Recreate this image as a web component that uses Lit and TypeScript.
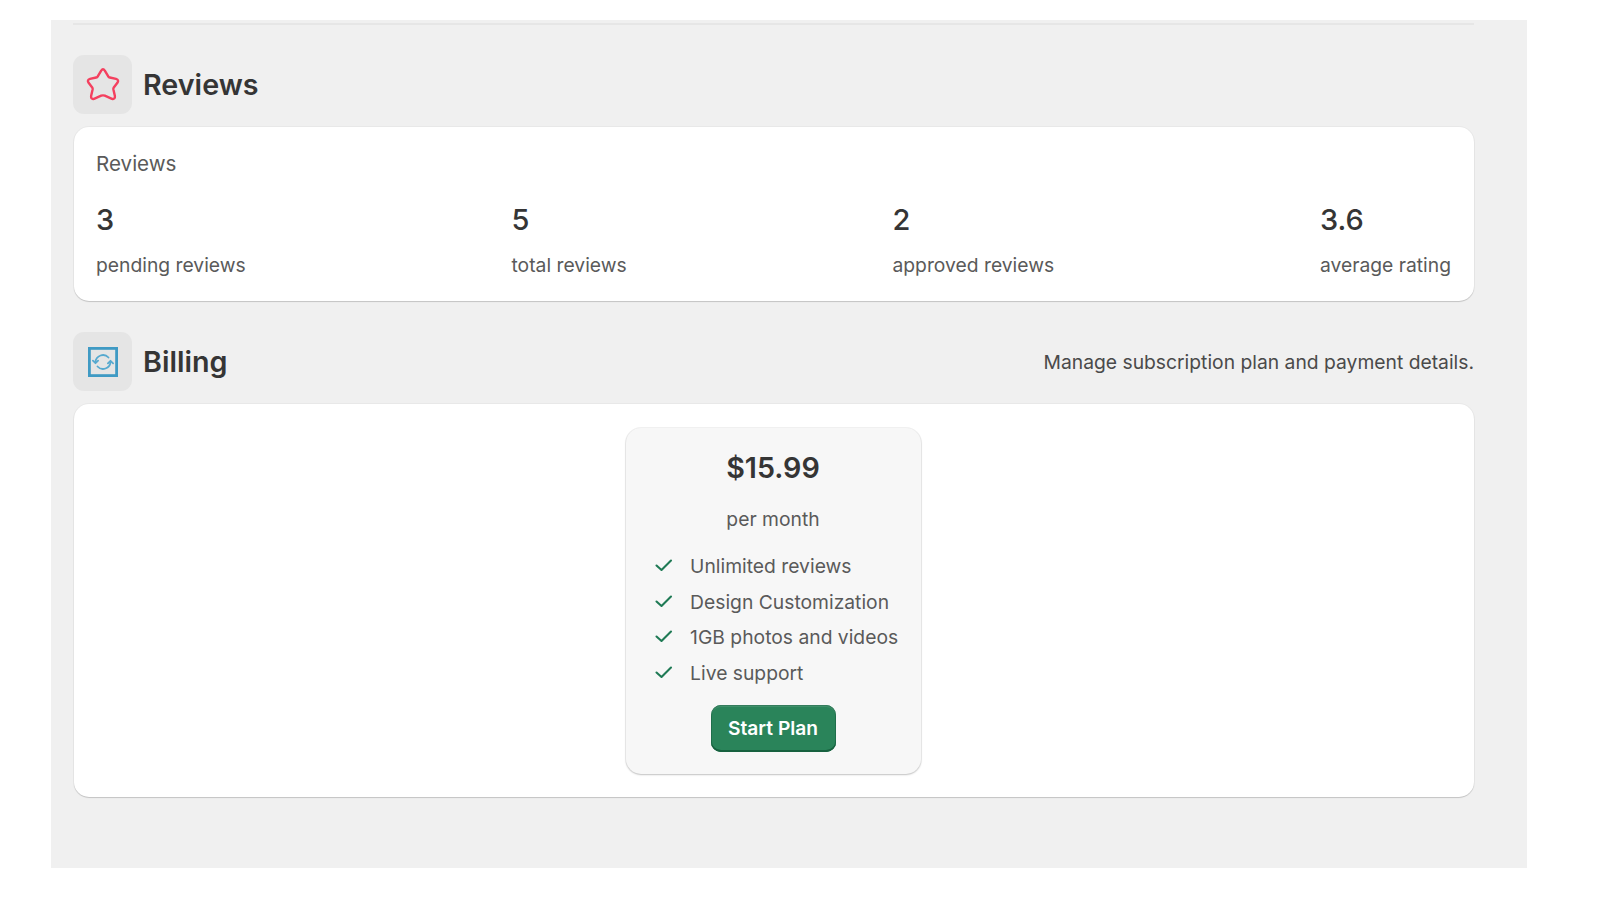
import { LitElement, html, css } from "lit";
import { customElement } from "lit/decorators.js";

const check = html`<svg class="check" viewBox="0 0 20 20" width="20" height="20" fill="none" stroke="#1f7a55" stroke-width="2.1" stroke-linecap="round" stroke-linejoin="round"><path d="M2.5 10.5 L7.5 15 L17 5.5"/></svg>`;

const features = ["Unlimited reviews", "Design Customization", "1GB photos and videos", "Live support"];
const stats = [
  ["3", "pending reviews"],
  ["5", "total reviews"],
  ["2", "approved reviews"],
  ["3.6", "average rating"],
];

@customElement("app-root")
export class AppRoot extends LitElement {
  static styles = css`
    :host {
      display: block;
      box-sizing: border-box;
      height: 900px;
      padding: 20px 73px 32px 51px;
      background: #fff;
      font-family: Inter, "Noto Sans", sans-serif;
      color: #303030;
    }
    .panel {
      box-sizing: border-box;
      height: 848px;
      background: #f0f0f0;
      padding: 3px 53px 0 22px;
      overflow: hidden;
    }
    .rule { height: 2px; background: #e6e6e6; }
    .head {
      display: flex;
      align-items: center;
      gap: 11px;
      margin-top: 30px;
      height: 59px;
    }
    .card + .head { margin-top: 31px; }
    .head + .card { margin-top: 13px; }
    .tile {
      width: 59px;
      height: 59px;
      border-radius: 11px;
      background: #e5e5e5;
      display: flex;
      align-items: center;
      justify-content: center;
      flex: none;
    }
    .star { margin-top: -2px; }
    h2 { margin: 0 0 1px; font-size: 28.7px; font-weight: 600; color: #353535; flex: 1; }
    .note { font-size: 19.3px; color: #4a4a4a; }
    .card {
      background: #fff;
      border-radius: 15px;
      margin-left: 1px;
      box-shadow: 0 1px 1px rgba(0, 0, 0, 0.16), 0 0 0 1px rgba(0, 0, 0, 0.03);
    }
    .reviews { box-sizing: border-box; height: 174px; padding: 23px 23px 0 22px; }
    .reviews .title { font-size: 20.6px; line-height: 27px; color: #5a5a5a; }
    .stats { display: flex; justify-content: space-between; margin-top: 25px; }
    .num { font-size: 29px; font-weight: 500; line-height: 36px; color: #353535; }
    .lbl { font-size: 19.3px; line-height: 27px; margin-top: 14px; color: #5a5a5a; }
    .billing { box-sizing: border-box; height: 393px; padding: 24px 2px 0 0; display: flex; justify-content: center; align-items: flex-start; }
    .plan {
      box-sizing: border-box;
      width: 295px;
      height: 346px;
      background: #f7f7f7;
      border-radius: 15px;
      box-shadow: 0 1px 2px rgba(0, 0, 0, 0.2), 0 0 0 1px rgba(0, 0, 0, 0.05);
      padding: 21px 0 0 28px;
      display: flex;
      flex-direction: column;
    }
    .price { font-size: 28.7px; line-height: 38px; font-weight: 600; text-align: center; margin-left: -28px; color: #353535; }
    .per { font-size: 19.3px; line-height: 27px; text-align: center; margin: 19px 0 0 -28px; color: #5a5a5a; }
    ul { list-style: none; margin: 20px 0 0; padding: 0; display: flex; flex-direction: column; gap: 8.5px; }
    li { display: flex; align-items: center; gap: 16.6px; font-size: 19.3px; line-height: 27px; color: #5a5a5a; white-space: nowrap; }
    .check { flex: none; margin-top: -3px; }
    .btn {
      align-self: center;
      margin: 18px 0 0 -28px;
      width: 125px;
      height: 47px;
      border: none;
      border-radius: 10px;
      background: #2a845a;
      color: #fff;
      font: 600 19.2px Inter, sans-serif;
      box-shadow: inset 0 -2px 0 #17613f, inset 0 2px 0 rgba(255, 255, 255, 0.1), inset 0 0 0 1px #1f6e4b;
      padding: 0;
    }
  `;

  render() {
    return html`
      <div class="panel">
        <div class="rule"></div>
        <div class="head">
          <div class="tile">
            <svg class="star" width="36" height="36" viewBox="0 0 36 36" fill="none" stroke="#f4405f" stroke-width="2.4" stroke-linejoin="round">
              <path d="M16.2 4.6 Q18 2 19.8 4.6 L23.4 10.6 Q23.8 11.3 24.8 11.5 L31 12.9 Q34.3 13.9 32.4 16.8 L28.6 21.8 Q28.2 22.5 28.4 23.5 L29.9 30 Q30.2 33.6 27 32.8 L19.8 29.7 Q18 29 16.2 29.7 L9 32.8 Q5.8 33.6 6.1 30 L7.6 23.5 Q7.8 22.5 7.4 21.8 L3.6 16.8 Q1.7 13.9 5 12.9 L11.2 11.5 Q12.2 11.3 12.6 10.6 Z"/>
            </svg>
          </div>
          <h2>Reviews</h2>
        </div>
        <div class="card reviews">
          <div class="title">Reviews</div>
          <div class="stats">
            ${stats.map(([n, l]) => html`<div><div class="num">${n}</div><div class="lbl">${l}</div></div>`)}
          </div>
        </div>
        <div class="head">
          <div class="tile">
            <svg width="30" height="30" viewBox="0 0 30 30" fill="none" stroke="#3f9ac4">
              <rect x="1.4" y="1.4" width="27.2" height="27.2" stroke-width="2.8"/>
              <g stroke="#56a9cf" stroke-width="1.8" stroke-linecap="round" stroke-linejoin="round">
                <path d="M7.5 15 A7.5 7.5 0 0 1 20.5 10.5 M22.5 15 A7.5 7.5 0 0 1 9.5 19.5"/>
                <path d="M4.9 13.6 L7.5 16.2 L10.1 13.6 M19.9 16.4 L22.5 13.8 L25.1 16.4"/>
              </g>
            </svg>
          </div>
          <h2>Billing</h2>
          <div class="note">Manage subscription plan and payment details.</div>
        </div>
        <div class="card billing">
          <div class="plan">
            <div class="price">$15.99</div>
            <div class="per">per month</div>
            <ul>${features.map((f) => html`<li>${check}<span>${f}</span></li>`)}</ul>
            <button class="btn">Start Plan</button>
          </div>
        </div>
      </div>
    `;
  }
}
